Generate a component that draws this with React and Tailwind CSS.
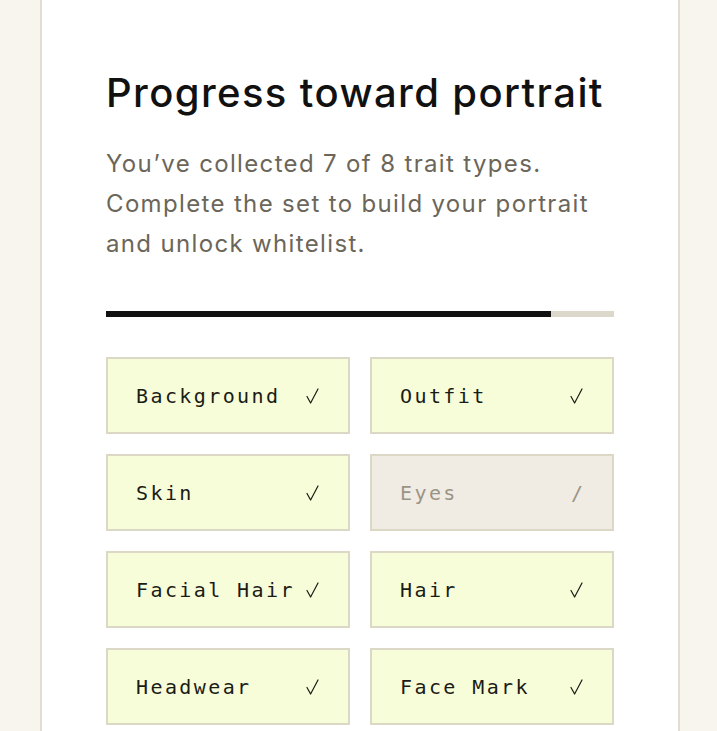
const traits = [
  { name: 'Background', done: true },
  { name: 'Outfit', done: true },
  { name: 'Skin', done: true },
  { name: 'Eyes', done: false },
  { name: 'Facial Hair', done: true },
  { name: 'Hair', done: true },
  { name: 'Headwear', done: true },
  { name: 'Face Mark', done: true },
]

function CheckMark() {
  return (
    <svg width="13" height="16" viewBox="0 0 13 16" fill="none" stroke="currentColor" strokeWidth="1.2" strokeLinecap="round" strokeLinejoin="round">
      <path d="M1 8.5l3.6 6.5 7.4-14" />
    </svg>
  )
}

function TraitTile({ name, done }) {
  return (
    <div
      className={`flex h-[77px] items-center justify-between border-2 border-[#dbd8c6] pl-[28px] pr-[29px] font-['DejaVu_Sans_Mono','Liberation_Mono',monospace] text-[20px] tracking-[0.12em] ${done ? 'bg-[#f7fdd9] text-[#1b1b16]' : 'bg-[#f0ece4] text-[#9b9485]'}`}
    >
      <span className="whitespace-nowrap">{name}</span>
      {done ? <CheckMark /> : <span className="tracking-normal">/</span>}
    </div>
  )
}

export default function App() {
  const collected = traits.filter((t) => t.done).length

  return (
    <div className="min-h-[731px] bg-[#f8f5ee] font-['Inter','Noto_Sans',sans-serif]">
      <div className="ml-10 w-[640px] border-x-2 border-[#e2ddd0] bg-white px-16 pb-16 pt-[69px]">
        <h2 className="text-[40px] font-medium leading-[48px] tracking-[0.035em] text-[#111111]">Progress toward portrait</h2>
        <p className="mt-[27px] text-[24px] leading-[40px] tracking-[0.056em] text-[#6b6659]">
          You’ve collected {collected} of {traits.length} trait types.
          <br />
          Complete the set to build your portrait and unlock whitelist.
        </p>

        <div className="mt-[47px] h-[6px] w-full bg-[#dcd8cc]">
          <div className="h-full bg-[#111111]" style={{ width: `${(collected / traits.length) * 100}%` }} />
        </div>

        <div className="mt-10 grid grid-cols-2 gap-5">
          {traits.map((t) => (
            <TraitTile key={t.name} name={t.name} done={t.done} />
          ))}
        </div>
      </div>
    </div>
  )
}
